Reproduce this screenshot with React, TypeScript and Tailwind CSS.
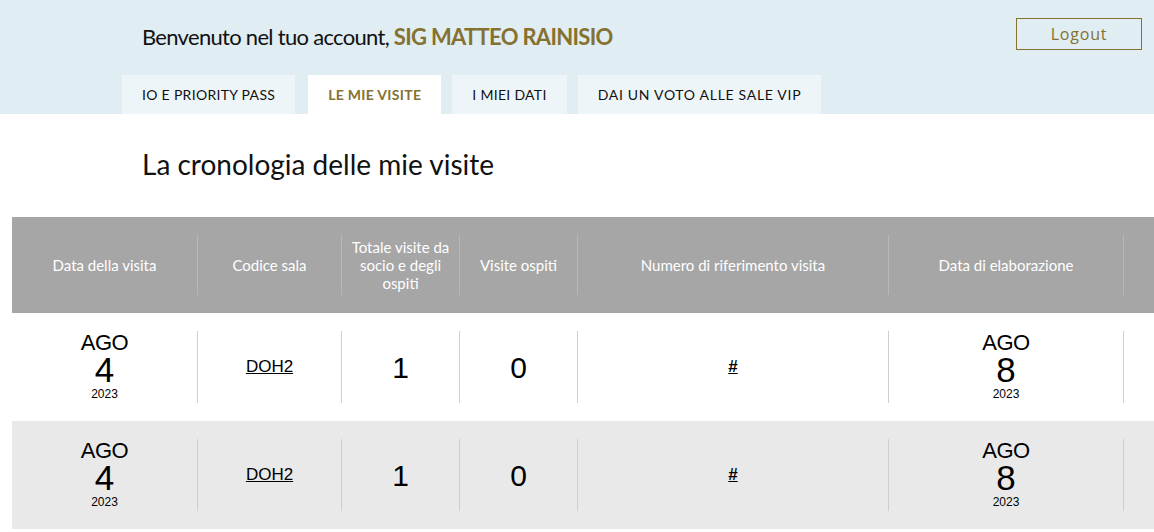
import React from "react";

const headers = [
  { label: "Data della visita", w: "w-[186px]" },
  { label: "Codice sala", w: "w-[144px]" },
  { label: "Totale visite da socio e degli ospiti", w: "w-[118px]" },
  { label: "Visite ospiti", w: "w-[118px]" },
  { label: "Numero di riferimento visita", w: "w-[311px]" },
  { label: "Data di elaborazione", w: "w-[235px]" },
  { label: "", w: "w-[200px]" },
];

function DateCell({ m, d, y }: { m: string; d: string; y: string }) {
  return (
    <div className="flex flex-col items-center" style={{ fontFamily: "'Liberation Sans', Arial, sans-serif" }}>
      <span className="text-[22px] leading-[20px] tracking-[-0.5px]">{m}</span>
      <span className="text-[35px] leading-[30px] mt-[2px]">{d}</span>
      <span className="text-[12px] leading-[14px] mt-[2px]">{y}</span>
    </div>
  );
}

function Row({ bg }: { bg: string }) {
  const cell = "flex items-center justify-center py-[18px]";
  const inner = "h-[72px] w-full flex items-center justify-center border-r border-[#cfcfcf]";
  const f = { fontFamily: "'Liberation Sans', Arial, sans-serif" };
  return (
    <div className={`flex h-[108px] ${bg} text-black`}>
      <div className={`${cell} w-[186px]`}>
        <div className={inner}>
          <DateCell m="AGO" d="4" y="2023" />
        </div>
      </div>
      <div className={`${cell} w-[144px]`}>
        <div className={inner}>
          <a className="underline text-[17px]" style={f}>DOH2</a>
        </div>
      </div>
      <div className={`${cell} w-[118px]`}>
        <div className={inner}>
          <span className="text-[30px]" style={f}>1</span>
        </div>
      </div>
      <div className={`${cell} w-[118px]`}>
        <div className={inner}>
          <span className="text-[30px]" style={f}>0</span>
        </div>
      </div>
      <div className={`${cell} w-[311px]`}>
        <div className={inner}>
          <a className="underline text-[17px] font-bold" style={f}>#</a>
        </div>
      </div>
      <div className={`${cell} w-[235px]`}>
        <div className={inner}>
          <DateCell m="AGO" d="8" y="2023" />
        </div>
      </div>
      <div className={`${cell} w-[200px]`}>
        <div className={inner}></div>
      </div>
    </div>
  );
}

export default function App() {
  const tabs = ["IO E PRIORITY PASS", "LE MIE VISITE", "I MIEI DATI", "DAI UN VOTO ALLE SALE VIP"];
  return (
    <div className="w-[1154px] h-[532px] overflow-hidden bg-white" style={{ fontFamily: "Lato, 'Noto Sans', sans-serif" }}>
      <div className="bg-[#e0edf3] h-[114px] relative">
        <div className="pl-[142px] pt-[22px] h-[75px]">
          <h1 className="text-[22px] leading-[30px] text-[#111] tracking-[-0.7px]">
            Benvenuto nel tuo account, <span className="font-bold text-[#857130]">SIG MATTEO RAINISIO</span>
          </h1>
        </div>
        <button
          className="absolute left-[1016px] top-[18px] w-[126px] h-[32px] border border-[#857130] text-[#857130] text-[16px] tracking-[0.8px]"
          style={{ fontFamily: "'Open Sans', sans-serif" }}
        >
          Logout
        </button>
        <div className="flex pl-[122px]">
          {tabs.map((t, i) => (
            <div
              key={t}
              className={`h-[39px] flex items-center text-[14px] ${
                i === 1 ? "bg-white text-[#857130] font-bold" : "bg-[#eef5f9] text-[#111]"
              } ${i === 0 ? "px-[20px] tracking-[0.3px]" : i === 1 ? "ml-[13px] px-[20px] tracking-[0.3px]" : i === 2 ? "ml-[11px] px-[20px] tracking-[0.3px]" : "ml-[11px] px-[20px] tracking-[0.7px]"}`}
            >
              {t}
            </div>
          ))}
        </div>
      </div>
      <div className="pl-[142px] pt-[32px] h-[103px]">
        <h2 className="text-[28px] leading-[36px] text-[#111]">La cronologia delle mie visite</h2>
      </div>
      <div className="ml-[12px] w-[1400px]">
        <div className="flex h-[96px] bg-[#a6a6a6] text-white">
          {headers.map((h, i) => (
            <div key={i} className={`${h.w} py-[18px]`}>
              <div className="h-[60px] border-r border-[#b8b8b8] flex items-center justify-center text-center px-[8px] text-[15px] leading-[18px]">
                {h.label}
              </div>
            </div>
          ))}
        </div>
        <Row bg="bg-white" />
        <Row bg="bg-[#e9e9e9]" />
      </div>
    </div>
  );
}
